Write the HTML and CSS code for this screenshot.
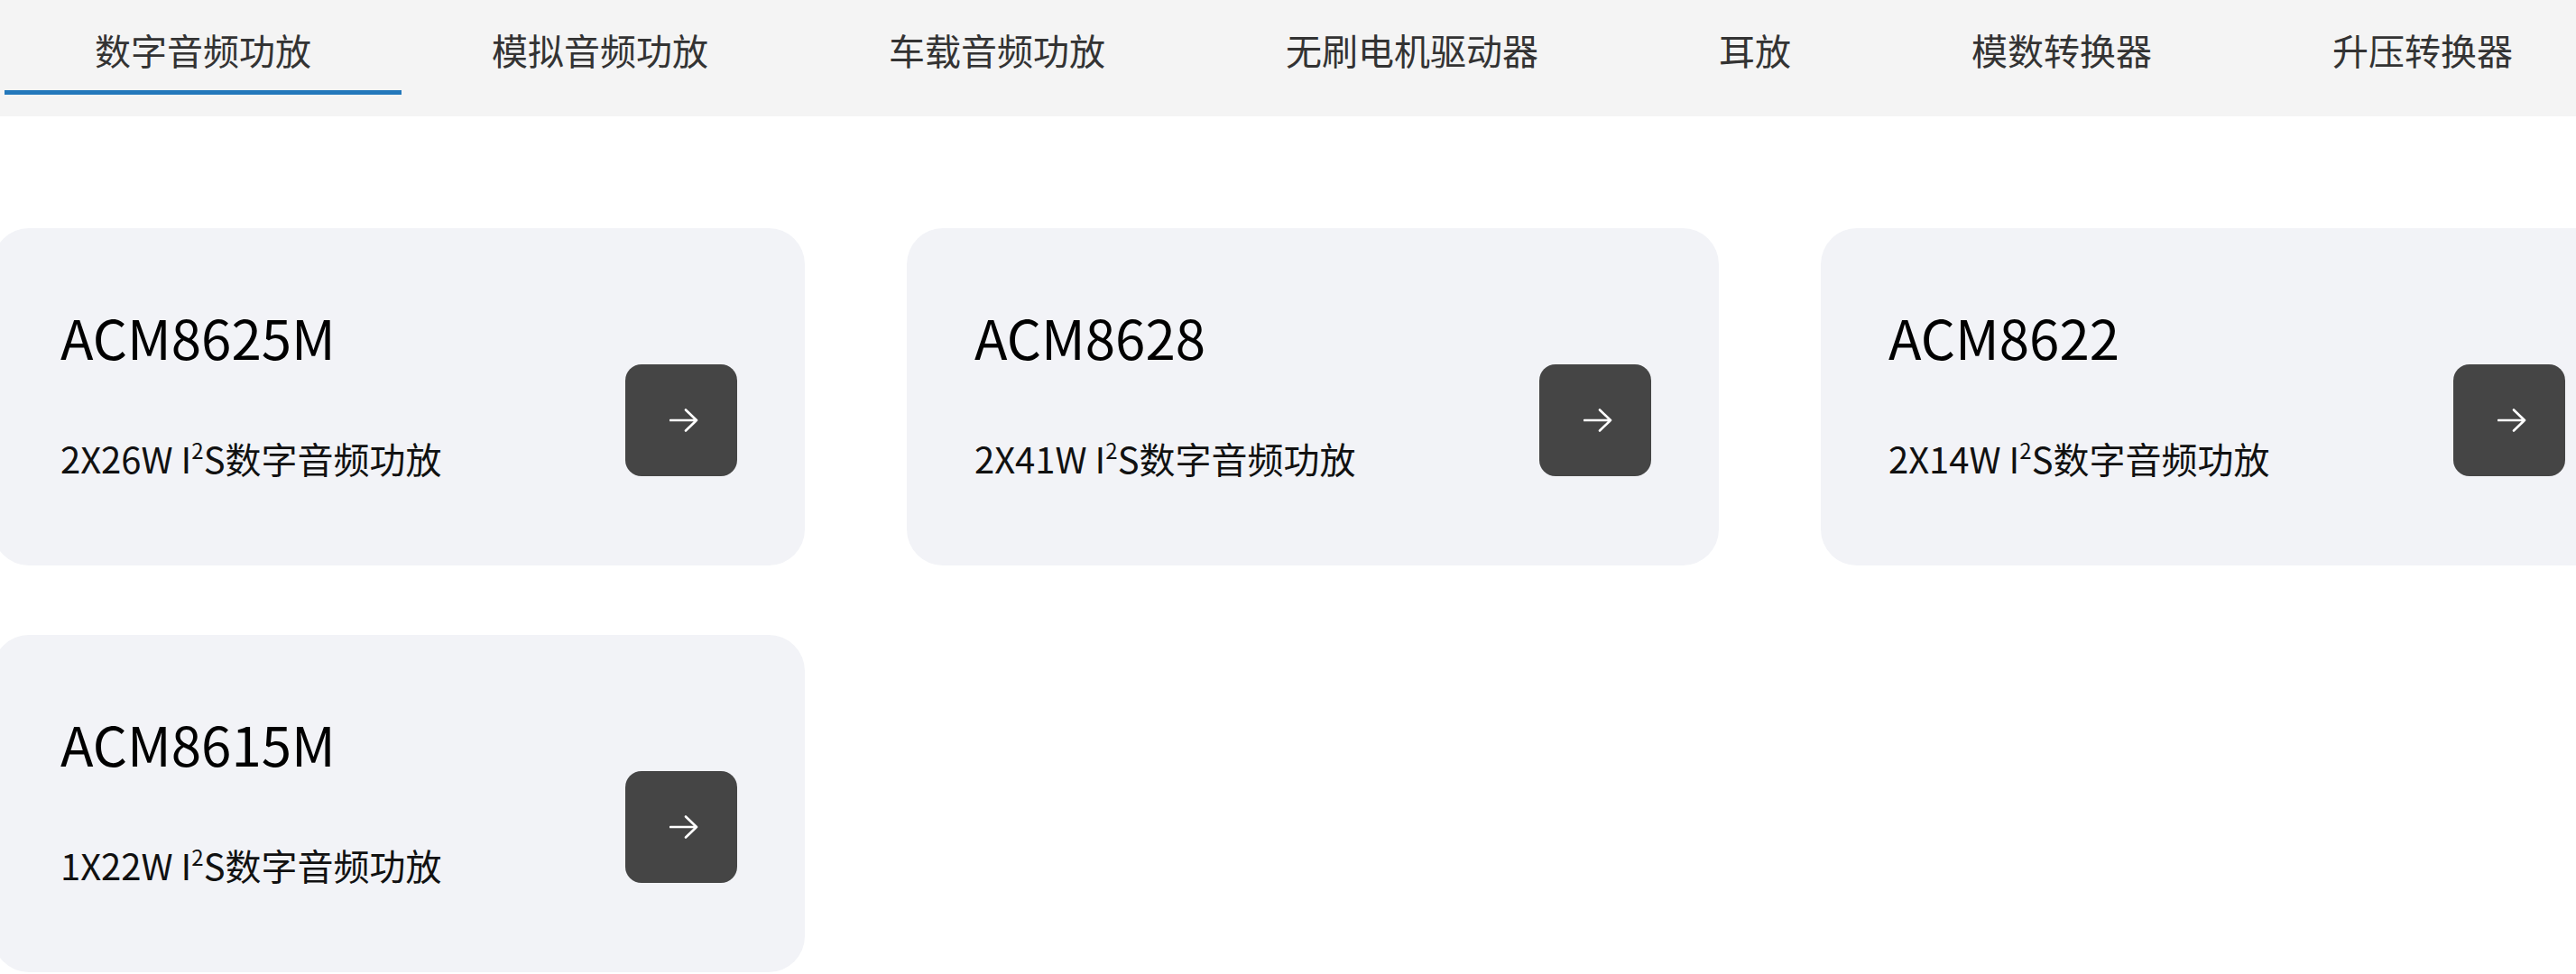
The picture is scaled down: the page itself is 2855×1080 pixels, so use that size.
FILE: index.html
```html
<!DOCTYPE html>
<html lang="zh-CN">
<head>
	<meta charset="UTF-8">
	<title>数字音频功放</title>
	<link rel="stylesheet" href="styles.css">
</head>
<body>
	<div class="tab-bar">
		<a class="tab active">数字音频功放</a>
		<a class="tab">模拟音频功放</a>
		<a class="tab">车载音频功放</a>
		<a class="tab">无刷电机驱动器</a>
		<a class="tab">耳放</a>
		<a class="tab">模数转换器</a>
		<a class="tab">升压转换器</a>
	</div>

	<div class="product-list">
		<div class="card">
			<div class="card-text">
				<h3 class="card-title">ACM8625M</h3>
				<p class="card-desc">2X26W I<sup>2</sup>S数字音频功放</p>
			</div>
			<a class="card-btn">
				<svg width="32" height="26" viewBox="0 0 32 26"><path d="M1 13H30M18 1.5L30 13L18 24.5" fill="none" stroke="#fff" stroke-width="2.6" stroke-linecap="round" stroke-linejoin="round"/></svg>
			</a>
		</div>
		<div class="card">
			<div class="card-text">
				<h3 class="card-title">ACM8628</h3>
				<p class="card-desc">2X41W I<sup>2</sup>S数字音频功放</p>
			</div>
			<a class="card-btn">
				<svg width="32" height="26" viewBox="0 0 32 26"><path d="M1 13H30M18 1.5L30 13L18 24.5" fill="none" stroke="#fff" stroke-width="2.6" stroke-linecap="round" stroke-linejoin="round"/></svg>
			</a>
		</div>
		<div class="card">
			<div class="card-text">
				<h3 class="card-title">ACM8622</h3>
				<p class="card-desc">2X14W I<sup>2</sup>S数字音频功放</p>
			</div>
			<a class="card-btn">
				<svg width="32" height="26" viewBox="0 0 32 26"><path d="M1 13H30M18 1.5L30 13L18 24.5" fill="none" stroke="#fff" stroke-width="2.6" stroke-linecap="round" stroke-linejoin="round"/></svg>
			</a>
		</div>
		<div class="card">
			<div class="card-text">
				<h3 class="card-title">ACM8615M</h3>
				<p class="card-desc">1X22W I<sup>2</sup>S数字音频功放</p>
			</div>
			<a class="card-btn">
				<svg width="32" height="26" viewBox="0 0 32 26"><path d="M1 13H30M18 1.5L30 13L18 24.5" fill="none" stroke="#fff" stroke-width="2.6" stroke-linecap="round" stroke-linejoin="round"/></svg>
			</a>
		</div>
	</div>
</body>
</html>
```

FILE: styles.css
```css
*{
	margin: 0;
	padding: 0;
	box-sizing: border-box;
}
body{
	font-family: "Noto Sans CJK SC", "Noto Sans", sans-serif;
	background: #fff;
	overflow: hidden;
}
.tab-bar{
	display: flex;
	align-items: flex-start;
	height: 129px;
	padding: 31px 0 0 5px;
	background: #f4f4f4;
	white-space: nowrap;
}
.tab{
	flex-shrink: 0;
	padding: 0 100px 21px;
	font-size: 40px;
	line-height: 48px;
	color: #333;
	border-bottom: 5px solid transparent;
	cursor: pointer;
}
.tab.active{
	border-bottom-color: #2378bb;
}
.product-list{
	display: grid;
	grid-template-columns: repeat(3, 900px);
	column-gap: 113px;
	row-gap: 77px;
	margin: 124px 0 0 -8px;
}
.card{
	display: flex;
	justify-content: space-between;
	align-items: flex-end;
	height: 374px;
	padding: 84px 75px 95px;
	background: #f2f3f7;
	border-radius: 40px;
}
.card-title{
	font-size: 60px;
	line-height: 72px;
	font-weight: 400;
	color: #000;
}
.card-desc{
	margin-top: 75px;
	font-size: 40px;
	line-height: 48px;
	color: #111;
}
.card-desc sup{
	font-size: 24px;
	line-height: 0;
	vertical-align: 16px;
}
.card-btn{
	display: flex;
	align-items: center;
	justify-content: center;
	width: 124px;
	height: 124px;
	margin-bottom: 4px;
	padding-left: 6px;
	background: #454545;
	border-radius: 18px;
	cursor: pointer;
}
```
